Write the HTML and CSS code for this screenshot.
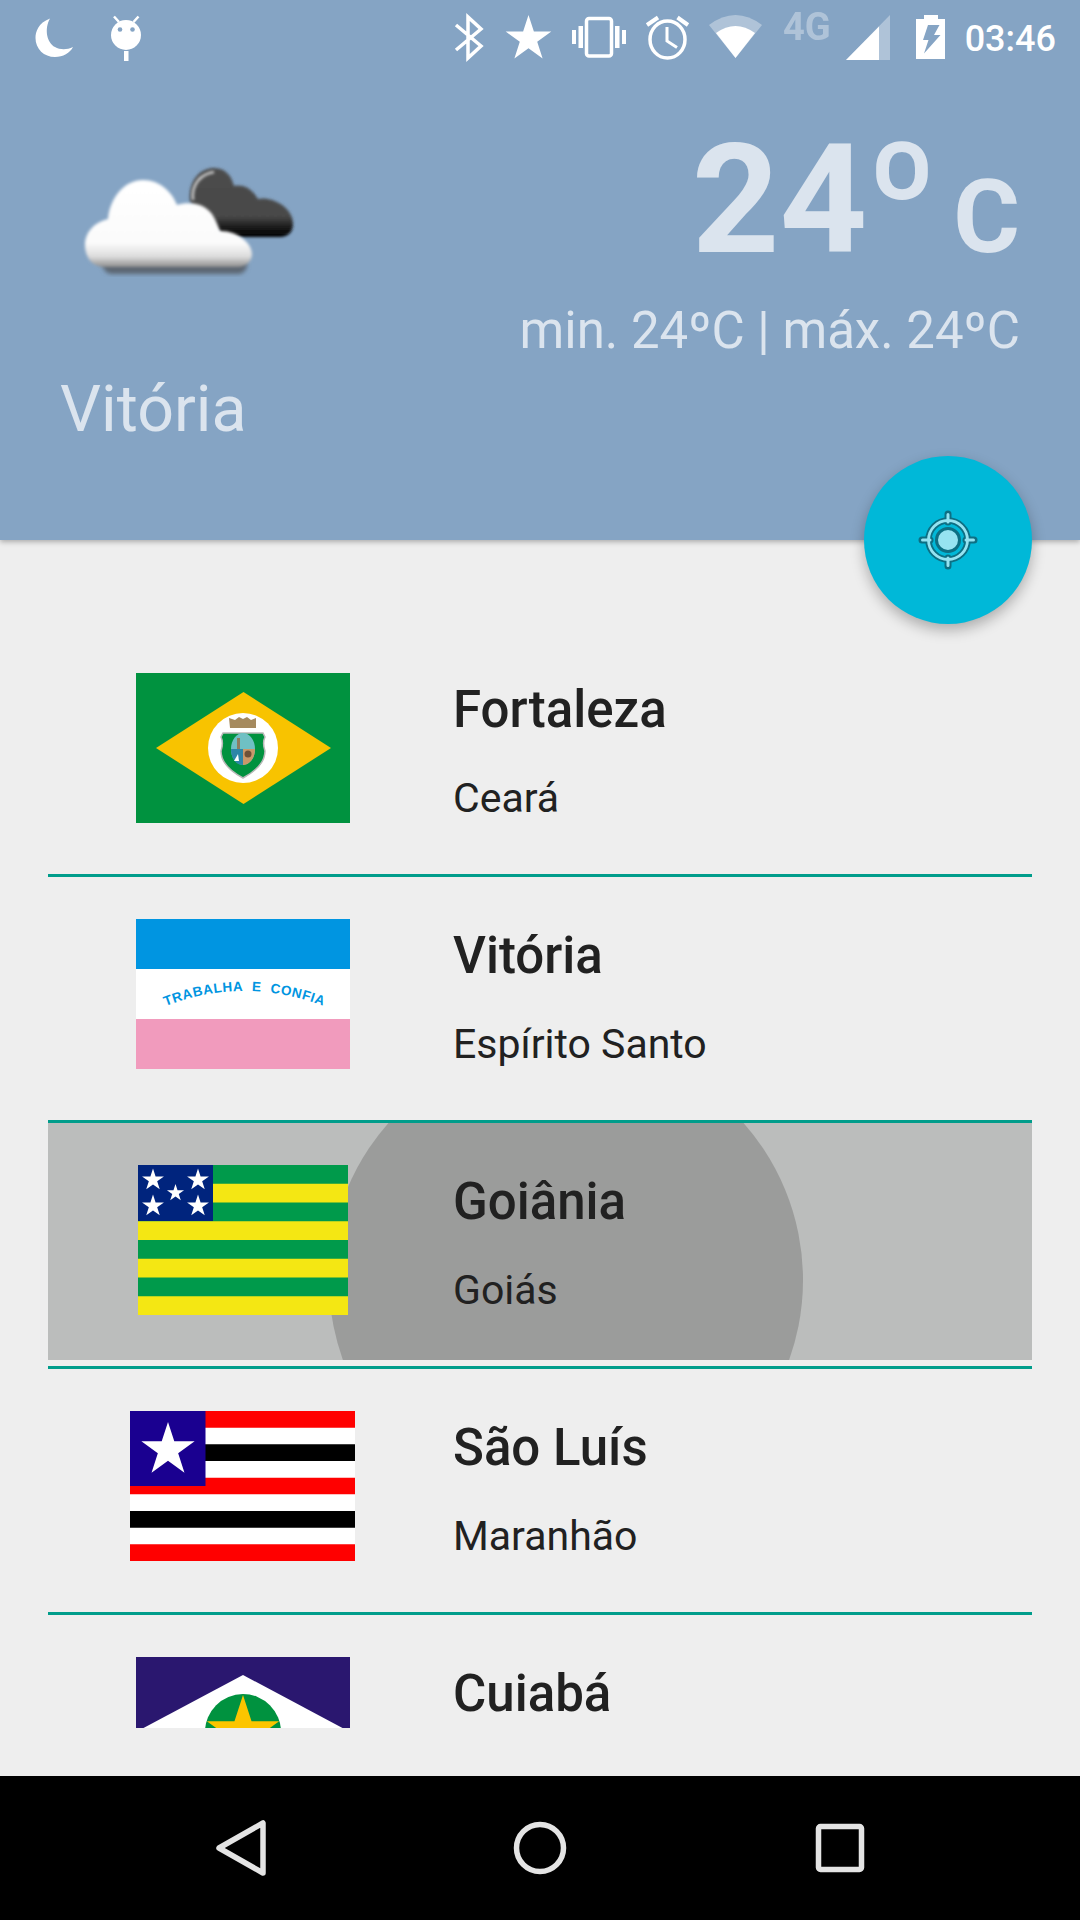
FILE: index.html
```html
<!DOCTYPE html>
<html lang="pt">
<head>
<meta charset="utf-8">
<title>Clima</title>
<link rel="stylesheet" href="styles.css">
</head>
<body>
<svg class="defs" width="0" height="0" aria-hidden="true">
  <defs>
    <polygon id="star" points="0,-1 .2245,-.309 .951,-.309 .363,.118 .588,.809 0,.382 -.588,.809 -.363,.118 -.951,-.309 -.2245,-.309"/>
    <linearGradient id="cloudWhite" x1="0" y1="0" x2="0" y2="1">
      <stop offset="0" stop-color="#ffffff"/>
      <stop offset=".72" stop-color="#fbfbfb"/>
      <stop offset=".88" stop-color="#dcdcdc"/>
      <stop offset="1" stop-color="#8e8e8e"/>
    </linearGradient>
    <linearGradient id="cloudDark" x1="0" y1="0" x2="0" y2="1">
      <stop offset="0" stop-color="#4c4c4c"/>
      <stop offset=".7" stop-color="#484848"/>
      <stop offset=".88" stop-color="#141414"/>
      <stop offset="1" stop-color="#000000"/>
    </linearGradient>
    <filter id="soft" x="-10%" y="-10%" width="120%" height="120%"><feGaussianBlur stdDeviation="1.6"/></filter>
    <filter id="softer" x="-10%" y="-20%" width="120%" height="140%"><feGaussianBlur stdDeviation="2"/></filter>
  </defs>
</svg>
<div class="screen">
  <header class="header">
    <div class="status">
      <svg class="si" width="68" height="75" viewBox="24 0 68 75"><path class="w" d="M50 18.500C38 23 35.500 32 35.500 38C35.500 49 44 57 55 57C63 57 70 53 73 47C67 50 60 50 55 47C47 43 44 29 50 18.500Z"/></svg>
      <svg class="si" width="60" height="75" viewBox="92 0 60 75"><circle class="w" cx="126" cy="35" r="15"/><circle class="bgfill" cx="120" cy="29.500" r="2.300"/><circle class="bgfill" cx="132.500" cy="29.500" r="2.300"/><path class="ws" stroke-width="2.500" d="M114 16.500L119 22M138.500 16.500L133.500 22"/><rect class="w" x="124" y="51" width="4.500" height="10"/></svg>
      <div class="spacer"></div>
      <svg class="si" width="44" height="75" viewBox="450 0 44 75"><path class="ws" stroke-width="3.500" d="M456 25L481 46L468 58V17L481 29L456 50"/></svg>
      <svg class="si" width="67" height="75" viewBox="494 0 67 75"><use class="w" href="#star" transform="translate(528.500 39) scale(24)"/></svg>
      <svg class="si" width="75" height="75" viewBox="561 0 75 75"><rect class="ws" stroke-width="3.500" x="586.500" y="18.500" width="25" height="37.500" rx="2.500"/><path class="w" d="M572 30h4v14h-4zM578.500 26h4.500v22h-4.500zM615 26h4.500v22H615zM622 30h4v14h-4z"/></svg>
      <svg class="si" width="63" height="75" viewBox="636 0 63 75"><ellipse class="ws" stroke-width="3.500" cx="667.500" cy="39.500" rx="17.500" ry="18.500"/><path class="ws" stroke-width="3" d="M667 27V41L677 47.500"/><path class="ws" stroke-width="4" d="M647 25L658 17.500M677.500 17.500L688 25"/></svg>
      <svg class="si" width="75" height="75" viewBox="699 0 75 75"><path class="pale" d="M709 25Q735.500 5 762 25L735.500 58Z"/><path class="w" d="M716 33Q735.500 19 755 33L735.500 58Z"/></svg>
      <svg class="si" width="62" height="75" viewBox="774 0 62 75"><text class="net" x="783" y="40">4G</text></svg>
      <svg class="si" width="70" height="75" viewBox="836 0 70 75"><path class="pale" d="M846 60L890 15V60Z"/><path class="w" d="M846 60L879 26.500V60Z"/></svg>
      <svg class="si" width="55" height="75" viewBox="906 0 55 75"><path class="w" d="M924 15H938V19H945V59H916V19H924Z"/><path class="bgfill" d="M928 25H939.500L934 35H940.500L924 53.500L928.500 40H923Z"/></svg>
      <span class="clock">03:46</span>
    </div>
    <div class="hero">
      <div class="hero-left">
        <svg class="weather" width="240" height="130" viewBox="70 155 240 130">
          <path d="M112 272C104 272 100 262 104 258H244C250 262 246 272 238 272Z" fill="#5c6672" filter="url(#softer)"/>
          <path d="M190 200C188 176 202 166 214 166C226 166 232 175 234 184C242 182 252 186 258 197C270 194 293 204 293 222C293 230 288 235 280 235H224Z" fill="url(#cloudDark)" filter="url(#soft)"/>
          <path d="M193 198C191 182 201 172 214 170" fill="none" stroke="#d4d4d4" stroke-width="2.500" filter="url(#soft)"/>
          <path d="M104 265C90 265 85 252 85 243C85 230 95 220 108 217C110 195 125 178 143 178C160 178 172 190 177 203C187 200 203 200 212 212C216 218 218 224 220 229C235 228 252 240 252 252C252 260 245 265 238 265Z" fill="url(#cloudWhite)" filter="url(#soft)"/>
        </svg>
        <div class="city">Vitória</div>
      </div>
      <div class="hero-right">
        <div class="temp"><span class="temp-num">24º</span><span class="temp-unit">C</span></div>
        <div class="range">min. 24ºC | máx. 24ºC</div>
      </div>
    </div>
    <button class="fab" type="button" aria-label="Localização">
      <svg width="60" height="60" viewBox="0 0 60 60">
        <path d="M30 4V12M30 48V56M4 30H12M48 30H56" stroke="#0d6f83" stroke-width="7" stroke-linecap="round"/>
        <circle cx="30" cy="30" r="19.500" fill="none" stroke="#0d6f83" stroke-width="6.500"/>
        <path d="M30 4.500V12M30 48V55.500M4.500 30H12M48 30H55.500" stroke="#96e3f1" stroke-width="3" stroke-linecap="round"/>
        <circle cx="30" cy="30" r="19.500" fill="none" stroke="#96e3f1" stroke-width="2.800"/>
        <circle cx="30" cy="30" r="11.500" fill="#96e3f1" stroke="#0d6f83" stroke-width="3"/>
      </svg>
    </button>
  </header>

  <main class="list">
    <div class="row">
      <div class="flag-cell">
        <svg class="flag" width="214" height="150" viewBox="0 0 214 150">
          <rect width="214" height="150" fill="#00923f"/>
          <polygon points="20,75 107.500,19 195,75 107.500,131" fill="#f8c300"/>
          <circle cx="107" cy="75" r="35" fill="#fff"/>
          <path d="M94 55L93 45L99 47L103 44L107 46L111 44L115 47L120 45L120 55Z" fill="#a58a5f"/>
          <path d="M87 60H127L129 64C127 68 127 72 129 78C129 90 120 98 107 105C94 98 85 90 85 78C87 72 87 68 85 64Z" fill="#00923f" stroke="#b9b9b9" stroke-width="1.500"/>
          <ellipse cx="107" cy="76" rx="12" ry="16" fill="#6fc0c4"/>
          <path d="M107 76H119C119 86 113 92 107 92Z" fill="#c9986a"/>
          <path d="M95 76H107V92C100 92 95 86 95 76Z" fill="#2d86a8"/>
          <circle cx="112" cy="81" r="3.500" fill="#6e5138"/>
          <rect x="101" y="65" width="3" height="11" fill="#8e7d5f"/>
          <path d="M98 88L102 81L103 88Z" fill="#fff"/>
        </svg>
      </div>
      <div class="info"><div class="name">Fortaleza</div><div class="state">Ceará</div></div>
    </div>
    <div class="divider"></div>
    <div class="row">
      <div class="flag-cell">
        <svg class="flag" width="214" height="150" viewBox="0 0 214 150">
          <rect width="214" height="50" fill="#0095e1"/>
          <rect y="50" width="214" height="50" fill="#fff"/>
          <rect y="100" width="214" height="50" fill="#f19bbd"/>
          <path id="motto" d="M27 88Q107 56 190 88" fill="none"/>
          <text class="motto"><textPath href="#motto" startOffset="50%">TRABALHA  E  CONFIA</textPath></text>
        </svg>
      </div>
      <div class="info"><div class="name">Vitória</div><div class="state">Espírito Santo</div></div>
    </div>
    <div class="divider"></div>
    <div class="row pressed">
      <div class="ripple"></div>
      <div class="flag-cell">
        <svg class="flag" width="210" height="150" viewBox="0 0 210 150">
          <rect width="210" height="150" fill="#f4e713"/>
          <path d="M0 0H210V18.750H0ZM0 37.500H210V56.250H0ZM0 75H210V93.750H0ZM0 112.500H210V131.250H0Z" fill="#009a4b"/>
          <rect width="75" height="56" fill="#00247d"/>
          <use href="#star" fill="#fff" transform="translate(15 15) scale(11.500)"/>
          <use href="#star" fill="#fff" transform="translate(60 15) scale(11.500)"/>
          <use href="#star" fill="#fff" transform="translate(15 41) scale(11.500)"/>
          <use href="#star" fill="#fff" transform="translate(60 41) scale(11.500)"/>
          <use href="#star" fill="#fff" transform="translate(37.500 28) scale(9)"/>
        </svg>
      </div>
      <div class="info"><div class="name">Goiânia</div><div class="state">Goiás</div></div>
    </div>
    <div class="divider"></div>
    <div class="row">
      <div class="flag-cell">
        <svg class="flag flag-wide" width="225" height="150" viewBox="0 0 225 150">
          <rect width="225" height="150" fill="#fff"/>
          <path d="M0 0H225V16.700H0ZM0 66.700H225V83.300H0ZM0 133.300H225V150H0Z" fill="#ff0000"/>
          <path d="M0 33.300H225V50H0ZM0 100H225V116.700H0Z" fill="#000"/>
          <rect width="75.500" height="75" fill="#1a0090"/>
          <use href="#star" fill="#fff" transform="translate(38 39) scale(28)"/>
        </svg>
      </div>
      <div class="info"><div class="name">São Luís</div><div class="state">Maranhão</div></div>
    </div>
    <div class="divider"></div>
    <div class="row">
      <div class="flag-cell">
        <svg class="flag" width="214" height="150" viewBox="0 0 214 150">
          <rect width="214" height="150" fill="#2a176f"/>
          <polygon points="107,18 214,75 107,132 0,75" fill="#fff"/>
          <circle cx="107" cy="75" r="38" fill="#00923f"/>
          <use href="#star" fill="#fcc500" transform="translate(107 76) scale(38)"/>
        </svg>
      </div>
      <div class="info"><div class="name">Cuiabá</div></div>
    </div>
  </main>

  <nav class="nav">
    <svg class="nav-icon" width="60" height="64" viewBox="0 0 60 64"><path d="M53 7V57L9 32Z" fill="none" stroke="#e4e4e4" stroke-width="5.500" stroke-linejoin="round"/></svg>
    <svg class="nav-icon" width="60" height="64" viewBox="0 0 60 64"><circle cx="30" cy="32" r="23.500" fill="none" stroke="#e4e4e4" stroke-width="5.500"/></svg>
    <svg class="nav-icon" width="60" height="64" viewBox="0 0 60 64"><rect x="8.500" y="10.500" width="43" height="43" rx="2" fill="none" stroke="#e4e4e4" stroke-width="5.500"/></svg>
  </nav>
</div>
</body>
</html>
```
FILE: styles.css
```css
* { box-sizing: border-box; }
html, body { margin: 0; padding: 0; }
body { width: 1080px; height: 1920px; overflow: hidden; font-family: Roboto, "Noto Sans", sans-serif; background: #eeeeee; }
.defs { position: absolute; }
.screen { width: 1080px; height: 1920px; display: flex; flex-direction: column; }

.header { position: relative; height: 540px; background: #85a4c4; box-shadow: 0 2px 5px rgba(0,0,0,.28); z-index: 2; }
.status { height: 75px; display: flex; padding: 0 24px; align-items: flex-start; }
.si { display: block; flex: none; }
.spacer { flex: 1; }
.w { fill: #fff; }
.ws { fill: none; stroke: #fff; }
.bgfill { fill: #85a4c4; }
.pale { fill: #fff; opacity: .35; }
.net { font-family: Roboto, sans-serif; font-weight: 700; font-size: 38px; fill: #fff; opacity: .35; }
.clock { width: 95px; text-align: right; font-size: 36px; font-weight: 500; line-height: 78px; color: #fff; }

.hero { display: flex; justify-content: space-between; padding: 0 60px 0 60px; }
.hero-left { display: flex; flex-direction: column; }
.weather { display: block; margin: 82px 0 0 10px; }
.city { margin-top: 82px; font-size: 64.500px; line-height: 80px; color: #dbe4ee; }
.hero-right { display: flex; flex-direction: column; align-items: flex-end; }
.temp { display: flex; align-items: baseline; font-weight: 700; color: #dbe4ee; line-height: 170px; margin-top: 40px; }
.temp-num { font-size: 153px; }
.temp-unit { font-size: 102px; margin-left: 16px; }
.range { margin-top: -1px; font-size: 51px; line-height: 60px; color: #dbe4ee; }

.fab { position: absolute; left: 864px; top: 456px; width: 168px; height: 168px; padding: 0; border: 0; border-radius: 50%; background: #00b8d8; box-shadow: 0 6px 14px rgba(0,0,0,.28); display: flex; align-items: center; justify-content: center; }

.list { height: 1140px; margin: 48px 48px 48px; padding-top: 43px; overflow: hidden; flex: none; }
.row { position: relative; height: 237px; margin-bottom: 6px; display: flex; }
.pressed { background: #bbbdbc; overflow: hidden; }
.ripple { position: absolute; left: 281px; top: -80px; width: 474px; height: 474px; border-radius: 50%; background: #9b9c9b; }
.divider { height: 3px; background: #009d8b; }
.flag-cell { position: relative; width: 390px; flex: none; padding-top: 42px; display: flex; justify-content: center; align-items: flex-start; }
.flag { display: block; }
.flag-wide { margin-left: -1px; }
.info { position: relative; padding-left: 15px; }
.name { margin-top: 44px; font-size: 51px; font-weight: 500; line-height: 70px; color: #212121; }
.state { margin-top: 18px; font-size: 41px; line-height: 70px; color: #212121; }
.motto { font-family: "Liberation Sans", Arial, sans-serif; font-weight: 700; font-size: 13.500px; fill: #0095e1; text-anchor: middle; white-space: pre; letter-spacing: .6px; }

.nav { flex: none; height: 144px; margin-top: auto; background: #000; display: flex; align-items: center; justify-content: space-between; padding: 0 210px; }
.nav-icon { display: block; }
```
